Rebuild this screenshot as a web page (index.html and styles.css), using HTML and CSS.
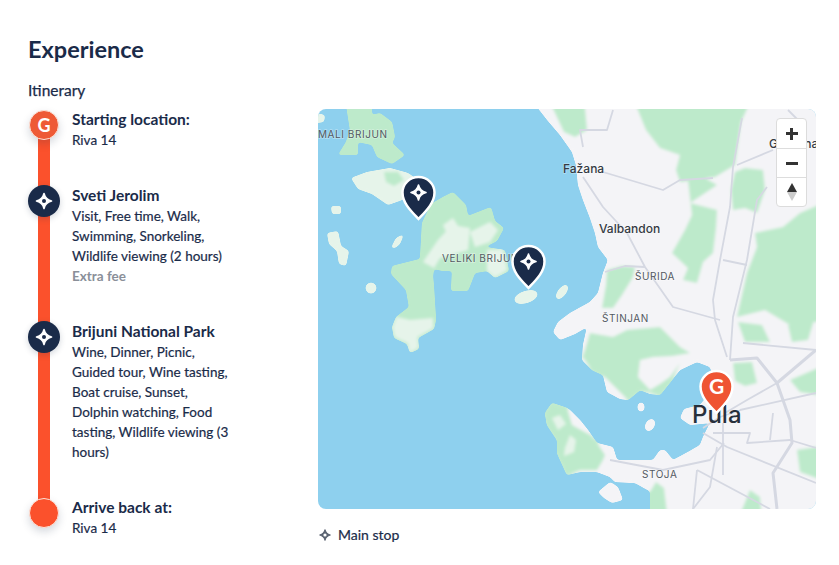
FILE: index.html
```html
<!DOCTYPE html>
<html lang="en">
<head>
<meta charset="utf-8">
<title>Experience</title>
<link rel="stylesheet" href="styles.css">
</head>
<body>
<svg class="defs" width="0" height="0" aria-hidden="true">
  <symbol id="star" viewBox="-10 -10 20 20">
    <path d="M0-7.500C1-3.200 3.200-1 7.500 0 3.200 1 1 3.200 0 7.500-1 3.200-3.200 1-7.500 0-3.200-1-1-3.200 0-7.500Z" fill="currentColor" stroke="currentColor" stroke-width="1.600" stroke-linejoin="round"/>
  </symbol>
  <filter id="soft" x="-5%" y="-5%" width="110%" height="110%">
    <feGaussianBlur stdDeviation="1.400"/>
    <feComponentTransfer><feFuncA type="linear" slope="6" intercept="-2.300"/></feComponentTransfer>
  </filter>
</svg>
<main class="page">
  <h1 class="title">Experience</h1>
  <div class="columns">
    <section class="itinerary">
      <h2 class="subtitle">Itinerary</h2>
      <ol class="timeline">
        <li class="stop">
          <span class="marker-col"><span class="marker marker-start">G</span></span>
          <div class="stop-text">
            <h3 class="stop-title">Starting location:</h3>
            <p class="stop-desc">Riva 14</p>
          </div>
        </li>
        <li class="stop">
          <span class="marker-col"><span class="marker marker-main"><svg class="marker-star"><use href="#star"/></svg><i class="marker-dot"></i></span></span>
          <div class="stop-text">
            <h3 class="stop-title">Sveti Jerolim</h3>
            <p class="stop-desc">Visit, Free time, Walk, Swimming, Snorkeling, Wildlife viewing (2 hours)</p>
            <p class="stop-fee">Extra fee</p>
          </div>
        </li>
        <li class="stop">
          <span class="marker-col"><span class="marker marker-main"><svg class="marker-star"><use href="#star"/></svg><i class="marker-dot"></i></span></span>
          <div class="stop-text">
            <h3 class="stop-title">Brijuni National Park</h3>
            <p class="stop-desc">Wine, Dinner, Picnic, Guided tour, Wine tasting, Boat cruise, Sunset, Dolphin watching, Food tasting, Wildlife viewing (3 hours)</p>
          </div>
        </li>
        <li class="stop">
          <span class="marker-col"><span class="marker marker-end"></span></span>
          <div class="stop-text">
            <h3 class="stop-title">Arrive back at:</h3>
            <p class="stop-desc">Riva 14</p>
          </div>
        </li>
      </ol>
    </section>
    <section class="map-col">
      <div class="map">
        <svg class="map-svg" viewBox="318 109 498 400" width="498" height="400">
          <rect class="water" x="318" y="109" width="498" height="400"/>
          <g class="soft">
            <path class="land" d="M530 98 548 121 560 135 572 152 576 165 578 185 583 200 590 218 595 233 598 247 608 260 603 273 598 293 590 302 570 313 558 322 553 332 560 340 575 334 587 327 583 345 582 360 592 370 603 375 607 392 620 399 628 400 640 390 650 394 660 395 672 380 680 370 697 362 710 367 716 385 700 405 684 409 680 418 690 425 710 423 703 437 700 445 688 452 673 460 665 450 660 450 653 460 630 460 617 460 613 447 597 443 588 430 580 420 570 410 567 408 552 403 545 413 547 425 557 440 557 453 567 475 580 472 597 472 610 477 615 482 635 483 653 493 650 522 830 522 830 98Z"/>
            <path class="land" d="M598 492 610 482 618 487 623 500 612 503 604 498Z"/>
            <g class="green">
              <path d="M633 98H752L741 122 735 165 715 177 695 180 680 182 676 170 680 155 660 148 646 130Z"/>
              <path d="M688 180 705 178 717 185 702 195 690 203 717 210 716 228 713 253 703 262 697 283 683 280 688 268 672 253 685 230 692 215Z"/>
              <path d="M735 172 745 168 763 170 765 190 757 213 745 208 733 210 731 190Z"/>
              <path d="M755 233 783 227 800 213 830 200V320L790 325 765 310 737 317 747 273 757 247Z"/>
              <path d="M607 270 622 266 635 267 633 277 622 295 613 308 602 308 606 285Z"/>
              <path d="M583 357 590 333 613 337 627 330 660 327 680 347 690 353 672 356 653 357 640 360 638 377 650 390 660 384 670 377 680 363 672 380 660 395 640 390 628 400 620 392 603 375 592 370Z"/>
              <path d="M548 98H584L587 130 575 137 564 132Z"/>
              <path d="M545 413 552 403 567 408 572 425 590 435 597 443 605 455 603 460 597 470 580 470 567 475 557 453 557 440 547 425Z"/>
              <path d="M733 363 752 362 757 383 745 386 735 381Z"/>
              <path d="M790 380 830 363V397L800 392Z"/>
              <path d="M797 450 830 445V483L800 472Z"/>
              <path d="M737 522 750 490 760 497 762 522Z"/>
              <path d="M738 322 762 325 770 342 745 342Z"/>
              <path d="M788 325 814 320 808 340 792 342Z"/>
              <path d="M650 492 656 482 664 488 668 522H650Z"/>
            </g>
            <g class="pale">
              <path d="M552 418 560 415 566 424 558 430Z"/>
              <path d="M570 435 576 440 574 452 564 456 565 448Z"/>
            </g>
            <g class="green">
              <path d="M345 98H372L372 115 380 113 392 122 395 137 392 143 405 155 392 164 377 157 372 145 358 142 358 155 338 155 346 142 350 130Z"/>
              <path d="M443 197 453 192 466 205 468 216 491 207 495 221 504 228 497 241 485 247 505 250 509 271 495 278 487 271 475 273 468 291 451 291 452 271 443 271 434 269 433 276 434 287 436 320 434 329 418 338 419 349 410 353 407 344 394 338 392 327 396 317 409 307 406 290 391 274 392 266 420 259 422 223 431 204Z"/>
            </g>
            <g class="pale">
              <path d="M351 178 367 172 390 168 408 173 425 185 402 200 388 205 372 194 358 189Z"/>
              <path d="M443 225 453 218 458 226 447 234Z"/>
              <path d="M438 240 452 225 470 228 468 250 440 258 434 268 423 262Z"/>
              <path d="M470 232 490 222 498 230 490 242 475 247Z"/>
              <path d="M487 250 503 250 507 270 495 277 487 270Z"/>
              <path d="M395 337 393 327 397 317 410 320 433 318 433 328 417 337 418 348 410 352 408 343Z"/>
              <path d="M331 206H341V214H332Z"/>
              <path d="M327 233 338 231 341 246 349 251 346 266 339 264 337 251 329 244Z"/>
              <path d="M391 248 396 238 404 234 400 244 395 248Z"/>
              <ellipse cx="371" cy="288" rx="5.500" ry="5.500"/>
              <ellipse cx="526" cy="297" rx="12" ry="6" transform="rotate(-18 526 297)"/>
              <ellipse cx="562" cy="292" rx="8.500" ry="4" transform="rotate(-52 562 292)"/>
              <path d="M310 112 325 115 324 122 310 124Z"/>
            </g>
            <g class="green">
              <path d="M384 172 398 172 404 180 394 186 386 182Z"/>
            </g>
            <ellipse class="land" cx="641" cy="407" rx="3.500" ry="4.500"/>
            <ellipse class="land" cx="650" cy="425" rx="4.500" ry="6.500" transform="rotate(30 650 425)"/>
          </g>
          <g class="roads">
            <path d="M742 118 733 167 730 207 720 260 713 300 715 320 727 357"/>
            <path d="M773 150 737 165"/>
            <path d="M603 172 663 190 680 180 713 178"/>
            <path d="M583 147 580 130 607 130 613 110"/>
            <path d="M583 177 603 207 627 233 645 267 673 307 720 320"/>
            <path d="M723 260 747 265"/>
            <path d="M767 187 757 200 747 260 733 317 730 360"/>
            <path d="M605 272 625 266 645 267"/>
            <path class="road-major" d="M730 360 757 358 777 383 790 420 792 443 773 473 777 509"/>
            <path class="road-major" d="M777 383 816 350"/>
            <path d="M777 383 747 400 725 413"/>
            <path d="M743 343 816 350"/>
            <path d="M740 410 816 393"/>
            <path d="M703 433 727 447 816 483"/>
            <path d="M723 423V475"/>
            <path d="M610 460 663 470 710 460 724 443"/>
            <path d="M697 470 693 509"/>
            <path d="M717 447 710 487 693 509"/>
            <path d="M697 470 770 509"/>
            <path d="M713 433H750L747 443 790 440 816 448"/>
            <path d="M773 413 770 440"/>
            <path d="M703 428 720 417 741 410"/>
            <path d="M788 110 800 122"/>
          </g>
          <text class="lbl lbl-small" x="318" y="138">MALI BRIJUN</text>
          <text class="lbl lbl-small" x="442" y="262">VELIKI BRIJUN</text>
          <text class="lbl lbl-small" x="635" y="280">ŠURIDA</text>
          <text class="lbl lbl-small" x="602" y="322">ŠTINJAN</text>
          <text class="lbl lbl-small" x="642" y="478">STOJA</text>
          <text class="lbl lbl-town" x="563" y="173">Fažana</text>
          <text class="lbl lbl-town" x="599" y="233">Valbandon</text>
          <text class="lbl lbl-town" x="769" y="148">Galižana</text>
          <text class="lbl lbl-city" x="692" y="423">Pula</text>
          <g class="pin pin-navy" transform="translate(402 176)">
            <path d="M16.500 1C25.500 1 32.500 8 32.500 16.500 32.500 27 24 35 16.500 43 9 35 .5 27 .5 16.500 .5 8 7.500 1 16.500 1Z"/>
            <use href="#star" class="pin-star" x="6.500" y="6.500" width="20" height="20"/>
            <circle class="pin-hole" cx="16.500" cy="16.500" r="2"/>
          </g>
          <g class="pin pin-navy" transform="translate(512 245)">
            <path d="M16.500 1C25.500 1 32.500 8 32.500 16.500 32.500 27 24 35 16.500 43 9 35 .5 27 .5 16.500 .5 8 7.500 1 16.500 1Z"/>
            <use href="#star" class="pin-star" x="6.500" y="6.500" width="20" height="20"/>
            <circle class="pin-hole" cx="16.500" cy="16.500" r="2"/>
          </g>
          <g class="pin pin-red" transform="translate(700 370)">
            <path d="M16.500 1C25.500 1 32.500 8 32.500 16.500 32.500 27 24 35 16.500 43 9 35 .5 27 .5 16.500 .5 8 7.500 1 16.500 1Z"/>
            <text class="pin-g" x="16.500" y="24">G</text>
          </g>
        </svg>
        <div class="controls">
          <span class="ctrl ctrl-plus"><i class="glyph-h"></i><i class="glyph-v"></i></span>
          <span class="ctrl"><i class="glyph-h"></i></span>
          <span class="ctrl ctrl-compass"><i class="tri-up"></i><i class="tri-down"></i></span>
        </div>
      </div>
      <div class="legend">
        <svg class="legend-star" viewBox="0 0 14 14"><use href="#star" width="14" height="14"/><circle class="legend-hole" cx="7" cy="7" r="1.600"/></svg>
        <span class="legend-text">Main stop</span>
      </div>
    </section>
  </div>
</main>
</body>
</html>
```

FILE: styles.css
```css
* { box-sizing: border-box; }
html, body { margin: 0; padding: 0; background: #fff; }
body {
  font-family: "Lato", "Liberation Sans", sans-serif;
  color: #1a2b49;
  width: 839px;
  height: 565px;
  overflow: hidden;
}
.defs { position: absolute; }
.page { padding: 35px 23px 0 28px; }
.title {
  margin: 0;
  font-size: 23.500px;
  line-height: 29px;
  font-weight: 700;
}
.columns { display: flex; margin-top: 16px; }
.itinerary { width: 290px; flex: none; }
.subtitle {
  margin: 0 0 8px;
  font-size: 15.500px;
  line-height: 21px;
  font-weight: 400;
  -webkit-text-stroke: .25px #1a2b49;
}
.timeline {
  position: relative;
  list-style: none;
  margin: 0;
  padding: 0;
  display: flex;
  flex-direction: column;
  gap: 35px;
}
.timeline::before {
  content: "";
  position: absolute;
  left: 10px;
  top: 16px;
  bottom: 26px;
  width: 12px;
  background: #fb512c;
}
.stop { position: relative; display: flex; gap: 12px; }
.marker-col { flex: none; width: 32px; display: flex; justify-content: center; align-items: flex-start; }
.marker {
  display: flex;
  align-items: center;
  justify-content: center;
  border-radius: 50%;
  position: relative;
}
.marker-start, .marker-end {
  width: 30px;
  height: 30px;
  margin-top: 1px;
  border: 1px solid #fde3d8;
  background: #ee5a36;
  color: #fff;
  font-size: 18px;
  font-weight: 700;
  box-shadow: 0 4px 8px rgba(26, 43, 73, .18);
}
.marker-end { background: #fb512c; }
.marker-main {
  width: 32px;
  height: 32px;
  background: #1a2b49;
  color: #fff;
  box-shadow: 0 2px 6px rgba(26, 43, 73, .2);
}
.marker-star { width: 20px; height: 20px; }
.marker-dot {
  position: absolute;
  left: 14px;
  top: 14px;
  width: 4px;
  height: 4px;
  border-radius: 50%;
  background: #1a2b49;
}
.stop-text { width: 166px; }
.stop-title {
  margin: 0;
  font-size: 15.500px;
  line-height: 21px;
  font-weight: 700;
}
.stop-desc {
  margin: 0;
  font-size: 13.500px;
  line-height: 20px;
  font-weight: 400;
  -webkit-text-stroke: .2px #1a2b49;
}
.stop-fee {
  margin: 0;
  font-size: 13.500px;
  line-height: 20px;
  font-weight: 700;
  color: #8a8f99;
}
.map-col { width: 498px; flex: none; margin-top: 29px; }
.map {
  position: relative;
  width: 498px;
  height: 400px;
  border-radius: 8px;
  overflow: hidden;
}
.map-svg { display: block; }
.soft { filter: url(#soft); }
.water { fill: #8ed0ee; }
.land { fill: #f4f4f7; }
.green path { fill: #bdeacb; }
.pale > * { fill: #e6f4ea; }
.roads path { fill: none; stroke: #d5d8e2; stroke-width: 1.800; stroke-linejoin: round; }
.roads .road-major { stroke-width: 3; }
.lbl { font-family: "Inter", "Liberation Sans", sans-serif; paint-order: stroke; stroke: rgba(255, 255, 255, .35); stroke-width: 1.500px; }
.lbl-small { font-size: 10px; letter-spacing: .55px; fill: #525861; }
.lbl-town { font-size: 12px; font-weight: 500; fill: #343a43; }
.lbl-city { font-size: 24px; font-weight: 500; fill: #27303c; stroke-width: 0; }
.pin path { stroke: #fff; stroke-width: 2.500; }
.pin-navy path { fill: #1a2b49; }
.pin-red path { fill: #ef5433; }
.pin-star { color: #fff; }
.pin-hole { fill: #1a2b49; }
.pin-g {
  font-family: "Lato", "Liberation Sans", sans-serif;
  font-size: 21px;
  font-weight: 700;
  fill: #fff;
  text-anchor: middle;
}
.controls {
  position: absolute;
  left: 458px;
  top: 9px;
  width: 31px;
  display: flex;
  flex-direction: column;
  background: #fff;
  border: 1px solid #dcdcdc;
  border-radius: 4px;
}
.ctrl {
  position: relative;
  height: 29px;
  display: flex;
  align-items: center;
  justify-content: center;
  border-top: 1px solid #ddd;
}
.ctrl:first-child { border-top: 0; }
.glyph-h { width: 12px; height: 3px; background: #333; }
.glyph-v { position: absolute; width: 3px; height: 12px; background: #333; }
.ctrl-compass { flex-direction: column; }
.tri-up {
  width: 0; height: 0;
  border-left: 5px solid transparent;
  border-right: 5px solid transparent;
  border-bottom: 9px solid #333;
}
.tri-down {
  width: 0; height: 0;
  border-left: 5px solid transparent;
  border-right: 5px solid transparent;
  border-top: 9px solid #ccc;
}
.legend { display: flex; align-items: center; gap: 6px; margin-top: 16px; height: 20px; }
.legend-star { width: 14px; height: 14px; color: #5b6472; }
.legend-hole { fill: #fff; }
.legend-text { font-size: 14px; font-weight: 400; line-height: 20px; -webkit-text-stroke: .2px #1a2b49; }
```
